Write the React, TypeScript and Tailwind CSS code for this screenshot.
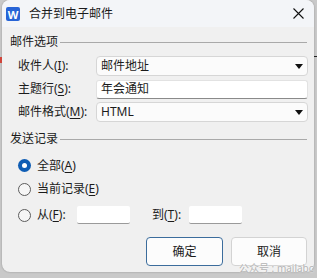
import React from "react";

const U = ({ c }: { c: string }) => <span className="underline underline-offset-2">{c}</span>;

const Arrow = () => (
  <svg width="8" height="5" viewBox="0 0 8 5" className="mr-[4px]">
    <path d="M0 0 L8 0 L4 5 Z" fill="#111" />
  </svg>
);

function GroupHeader({ title }: { title: string }) {
  return (
    <div className="flex h-[16px] items-center pr-[7px]">
      <span className="leading-none">{title}</span>
      <div className="ml-[2px] h-px flex-1 bg-[#a9a9a9]" />
    </div>
  );
}

function Radio({ checked }: { checked?: boolean }) {
  if (checked) {
    return (
      <div className="flex h-[13px] w-[13px] items-center justify-center rounded-full bg-[#0f5db4]">
        <div className="h-[5px] w-[5px] rounded-full bg-white" />
      </div>
    );
  }
  return <div className="h-[13px] w-[13px] rounded-full border border-[#5c5c5c] bg-[#f6f6f6]" />;
}

export default function App() {
  return (
    <div
      className="relative h-[278px] w-[317px] overflow-hidden bg-[#c9c9c9] text-[12px] text-[#1b1b1b]"
      style={{ fontFamily: '"Noto Sans", "Noto Sans CJK SC", sans-serif' }}
    >
      <div className="absolute left-0 top-[57px] h-[6px] w-[2px] bg-[#d0453a]" />
      <div className="absolute right-0 top-[56px] h-px w-[3px] bg-[#222]" />
      <div className="ml-[2px] flex h-[272px] w-[312px] flex-col overflow-hidden rounded-[8px] bg-[#f0f0f0] shadow-[0_0_2px_rgba(0,0,0,0.3)]">
        {/* title bar */}
        <div className="flex h-[27px] items-center bg-[#f3f5f8] pl-[4px] pr-[10px]">
          <div className="mt-[1px] flex h-[14px] w-[14px] items-center justify-center rounded-[2px] bg-[#2764d6] text-[11px] font-bold leading-none text-white">
            W
          </div>
          <span className="ml-[9px] leading-none">合并到电子邮件</span>
          <div className="flex-1" />
          <svg width="11" height="11" viewBox="0 0 11 11">
            <path d="M0.5 0.5 L10.5 10.5 M10.5 0.5 L0.5 10.5" stroke="#111" strokeWidth="1.1" />
          </svg>
        </div>

        <div className="flex flex-1 flex-col pl-[8px]">
          <div className="mt-[7px]">
            <GroupHeader title="邮件选项" />
          </div>

          <div className="mt-[6px] flex flex-col gap-[3px] pl-[8px] pr-[6px]">
            <div className="flex h-[20px] items-center">
              <span className="w-[78px]">
                收件人(<U c="I" />):
              </span>
              <div className="flex h-[20px] flex-1 items-center justify-between rounded-[4px] border border-[#d6d6d6] bg-[#fbfbfb] pl-[4px]">
                <span>邮件地址</span>
                <Arrow />
              </div>
            </div>
            <div className="flex h-[20px] items-center">
              <span className="w-[78px]">
                主题行(<U c="S" />):
              </span>
              <div className="flex h-[19px] flex-1 items-center rounded-[3px] border border-[#e2e2e2] border-b-[#8a8a8a] bg-white pl-[4px]">
                <span>年会通知</span>
              </div>
            </div>
            <div className="flex h-[20px] items-center">
              <span className="w-[78px]">
                邮件格式(<U c="M" />):
              </span>
              <div className="flex h-[20px] flex-1 items-center justify-between rounded-[4px] border border-[#d6d6d6] bg-[#fbfbfb] pl-[4px]">
                <span>HTML</span>
                <Arrow />
              </div>
            </div>
          </div>

          <div className="mt-[9px]">
            <GroupHeader title="发送记录" />
          </div>

          <div className="mt-[8px] flex flex-col pl-[8px]">
            <div className="flex h-[21px] items-center gap-[6px]">
              <Radio checked />
              <span>
                全部(<U c="A" />)
              </span>
            </div>
            <div className="mt-[3px] flex h-[20px] items-center gap-[6px]">
              <Radio />
              <span>
                当前记录(<U c="E" />)
              </span>
            </div>
            <div className="mt-[7px] flex h-[18px] items-center">
              <Radio />
              <span className="ml-[6px] w-[40px]">
                从(<U c="F" />):
              </span>
              <div className="h-[18px] w-[53px] rounded-[2px] border-b border-[#9a9a9a] bg-white" />
              <span className="ml-[22px] w-[37px]">
                到(<U c="T" />):
              </span>
              <div className="h-[18px] w-[53px] rounded-[2px] border-b border-[#9a9a9a] bg-white" />
            </div>
          </div>

          <div className="mt-[13px] flex justify-end gap-[8px] pr-[7px]">
            <div className="flex h-[29px] w-[77px] items-center justify-center rounded-[4px] border border-[#3b6c9c] bg-[#fcfcfc]">
              确定
            </div>
            <div className="flex h-[29px] w-[76px] items-center justify-center rounded-[4px] border border-[#d3d3d3] bg-[#fcfcfc]">
              取消
            </div>
          </div>
        </div>
      </div>
      <div className="absolute left-[239px] top-[263px] whitespace-nowrap text-[10px] leading-none text-[#b4b4b4] [text-shadow:0_0_2px_#fff]">
        公众号 : mailabc
      </div>
    </div>
  );
}
